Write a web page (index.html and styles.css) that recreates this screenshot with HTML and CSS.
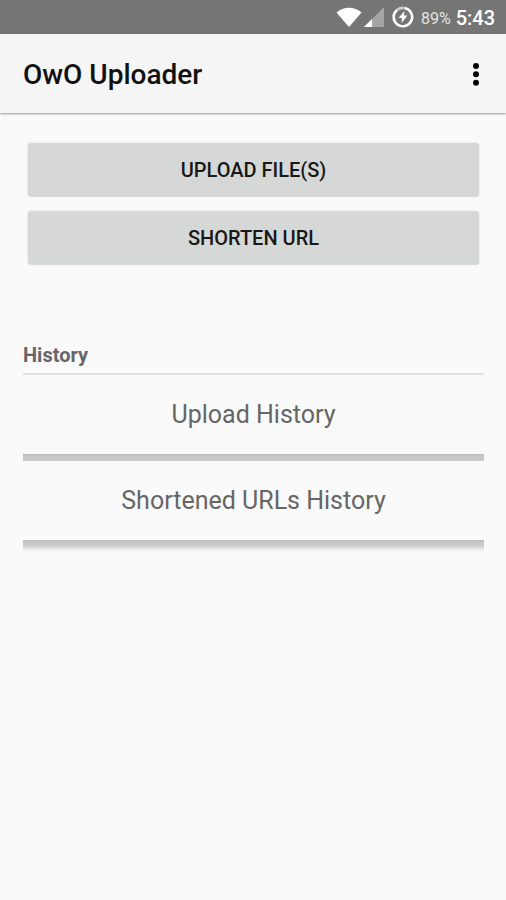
FILE: index.html
```html
<!DOCTYPE html>
<html lang="en">
<head>
<meta charset="utf-8">
<meta name="viewport" content="width=device-width, initial-scale=1">
<title>OwO Uploader</title>
<link rel="stylesheet" href="styles.css">
</head>
<body>
<div class="status-bar">
  <svg class="wifi" width="26" height="20" viewBox="0 0 26 20" aria-hidden="true"><path d="M0.500 5.500C7.500-.8 18.500-.8 25.500 5.500L13 20Z" fill="#fff"/></svg>
  <svg class="signal" width="20" height="20" viewBox="0 0 20 20" aria-hidden="true"><path d="M20 0V20H0Z" fill="#a5a5a5"/><path d="M8 12V20H0Z" fill="#fff"/></svg>
  <svg class="battery" width="22" height="22" viewBox="0 0 22 22" aria-hidden="true"><path d="M12.500 2A9.200 9.200 0 1 1 5 4" fill="none" stroke="#fff" stroke-width="2.600"/><path d="M5 4A9.200 9.200 0 0 1 12.500 2" fill="none" stroke="#ccc" stroke-width="2.600"/><path d="M12.500 5L6.500 12H10L9.500 17L15.500 9.500H12Z" fill="#fff"/></svg>
  <span class="percent">89%</span>
  <time class="clock">5:43</time>
</div>
<header class="app-bar">
  <h1 class="title">OwO Uploader</h1>
  <button class="menu" type="button" aria-label="More options">
    <svg width="8" height="24" viewBox="0 0 8 24" aria-hidden="true"><g fill="#050505"><circle cx="4" cy="3" r="3"/><circle cx="4" cy="11.300" r="3"/><circle cx="4" cy="19.700" r="3"/></g></svg>
  </button>
</header>
<main class="content">
  <div class="actions">
    <button class="action" type="button">UPLOAD FILE(S)</button>
    <button class="action" type="button">SHORTEN URL</button>
  </div>
  <section class="history">
    <h2 class="section-title">History</h2>
    <button class="entry" type="button">Upload History</button>
    <button class="entry" type="button">Shortened URLs History</button>
  </section>
</main>
</body>
</html>
```
FILE: styles.css
```css
* {
  box-sizing: border-box;
}

body {
  margin: 0;
  min-height: 100vh;
  background: #fafafa;
  font-family: Roboto, sans-serif;
}

button {
  border: 0;
  font-family: inherit;
  cursor: pointer;
}

.status-bar {
  display: flex;
  align-items: center;
  justify-content: flex-end;
  height: 34px;
  padding: 0 11px;
  background: #757575;
  color: #fff;
}

.signal {
  margin-left: 2px;
}

.battery {
  margin-left: 8px;
}

.percent {
  margin: 2px 5px 0 7px;
  color: #e4e4e4;
  font-size: 16px;
}

.clock {
  margin-top: 2px;
  font-size: 20px;
  font-weight: 500;
}

.app-bar {
  display: flex;
  align-items: center;
  justify-content: space-between;
  height: 79px;
  padding: 2px 18px 0 23px;
  background: #f5f5f5;
  box-shadow: 0 1px 2px rgba(0, 0, 0, 0.4);
}

.title {
  margin: 0;
  color: #111;
  font-size: 28px;
  font-weight: 500;
}

.menu {
  display: flex;
  padding: 8px;
  background: none;
}

.content {
  padding: 30px 22px 0 23px;
}

.actions {
  display: grid;
  gap: 15px;
  padding: 0 5px;
}

.action {
  height: 53px;
  border-radius: 3px;
  background: #d6d8d7;
  box-shadow: 0 0 2px rgba(0, 0, 0, 0.15), 0 1px 1px rgba(0, 0, 0, 0.1);
  color: #181818;
  font-size: 20px;
  font-weight: 500;
}

.history {
  margin-top: 80px;
}

.section-title {
  margin: 0;
  padding-bottom: 7px;
  border-bottom: 2px solid #e2e2e2;
  color: #666;
  font-size: 20px;
  font-weight: 700;
  line-height: 22px;
}

.entry {
  display: block;
  width: 100%;
  height: 86px;
  padding: 0 0 7px;
  background: linear-gradient(#b9b9b9, #c8c8c8 2px) bottom / 100% 7px no-repeat;
  color: #666;
  font-size: 25px;
}

.entry:last-child {
  height: 92px;
  padding-bottom: 13px;
  background: linear-gradient(#b9b9b9, #c6c6c6 2px, #cecece 6px, #f0f0f0 10px, #fafafa) bottom / 100% 13px no-repeat;
}
```
